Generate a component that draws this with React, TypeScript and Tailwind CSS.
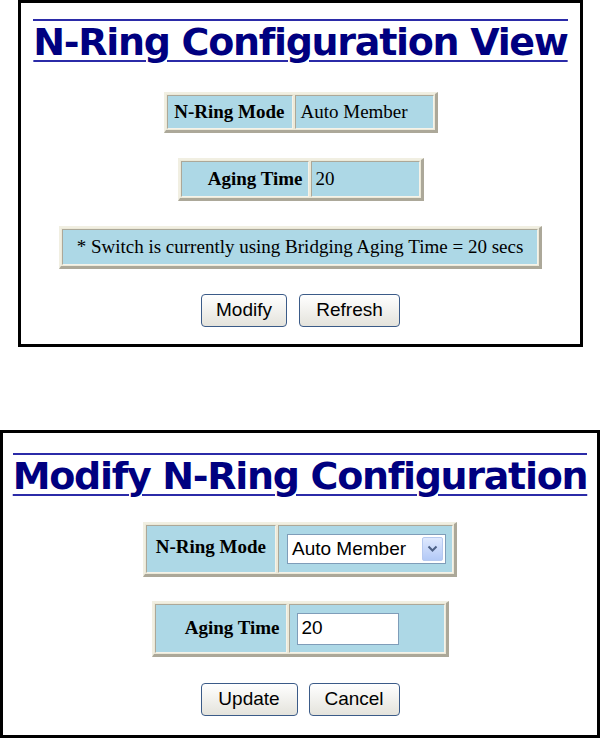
import React from "react";

const serif = { fontFamily: '"Liberation Serif", "Times New Roman", serif' };
const sans = { fontFamily: '"Liberation Sans", Arial, sans-serif' };
const verdana = { fontFamily: '"DejaVu Sans", Verdana, sans-serif' };

function Tbl({ children }: { children: React.ReactNode }) {
  return (
    <div className="flex gap-[2px] p-[1px] bg-[#ece9d8] border-solid border-t-2 border-l-2 border-b-[3px] border-r-[3px] border-t-[#f1efe2] border-l-[#f1efe2] border-b-[#aca899] border-r-[#aca899]">
      {children}
    </div>
  );
}

function Cell({ className, children }: { className: string; children?: React.ReactNode }) {
  return (
    <div
      className={
        "flex bg-[#add8e6] border border-solid border-t-[#aca899] border-l-[#aca899] border-b-[#f5f3ea] border-r-[#f5f3ea] text-[19px] text-black " +
        className
      }
      style={serif}
    >
      {children}
    </div>
  );
}

function Btn({ w, children }: { w: string; children: React.ReactNode }) {
  return (
    <div
      className={
        "h-[33px] flex items-center justify-center rounded-[4px] border border-solid border-[#3b5b88] bg-gradient-to-b from-white to-[#e4e3dc] text-[19px] text-black " +
        w
      }
      style={sans}
    >
      {children}
    </div>
  );
}

function Heading({ children }: { children: React.ReactNode }) {
  return (
    <div className="border-t-2 border-solid border-[#2b2ba8]">
      <div
        className="text-[38px] leading-[42px] tracking-[-1.3px] font-bold text-[#000080] underline decoration-2 underline-offset-[5px] decoration-[#2b2ba8] whitespace-nowrap"
        style={verdana}
      >
        {children}
      </div>
    </div>
  );
}

export default function App() {
  return (
    <div className="w-[602px] h-[739px] bg-white relative">
      {/* Top panel */}
      <div className="ml-[18px] w-[565px] border-[3px] border-solid border-black flex flex-col items-center pt-[16px] pb-[17px]">
        <Heading>N-Ring Configuration View</Heading>
        <div className="mt-[29px]">
          <Tbl>
            <Cell className="w-[126px] h-[34px] items-center justify-end pr-[7px] font-bold">N-Ring Mode</Cell>
            <Cell className="w-[139px] h-[34px] items-center pl-[5px]">Auto Member</Cell>
          </Tbl>
        </div>
        <div className="mt-[25px]">
          <Tbl>
            <Cell className="w-[128px] h-[36px] items-center justify-end pr-[5px] font-bold">Aging Time</Cell>
            <Cell className="w-[109px] h-[36px] items-center pl-[4px]">20</Cell>
          </Tbl>
        </div>
        <div className="mt-[25px]">
          <Tbl>
            <Cell className="w-[476px] h-[36px] items-center justify-center">
              * Switch is currently using Bridging Aging Time = 20 secs
            </Cell>
          </Tbl>
        </div>
        <div className="mt-[25px] flex gap-[12px]">
          <Btn w="w-[86px]">Modify</Btn>
          <Btn w="w-[101px]">Refresh</Btn>
        </div>
      </div>

      {/* Bottom panel */}
      <div className="mt-[83px] w-[600px] border-[3px] border-solid border-black flex flex-col items-center pt-[20px] pb-[19px]">
        <Heading>Modify N-Ring Configuration</Heading>
        <div className="mt-[25px]">
          <Tbl>
            <Cell className="w-[130px] h-[48px] items-start justify-end pr-[9px] pt-[7px] font-bold">N-Ring Mode</Cell>
            <Cell className="w-[175px] h-[48px] items-center pl-[8px]">
              <div
                className="w-[159px] h-[30px] bg-white border border-solid border-[#7f9db9] flex items-center pl-[4px] pr-[2px]"
                style={sans}
              >
                <span className="flex-1 text-[19px] text-black">Auto Member</span>
                <div className="w-[21px] h-[24px] rounded-[2px] border border-solid border-[#b6c9ef] bg-gradient-to-b from-[#dfe9fe] to-[#b3c9f6] flex items-center justify-center">
                  <svg width="11" height="8" viewBox="0 0 11 8">
                    <path d="M1.5 1.5 L5.5 5.5 L9.5 1.5" fill="none" stroke="#4d6185" strokeWidth="2" />
                  </svg>
                </div>
              </div>
            </Cell>
          </Tbl>
        </div>
        <div className="mt-[24px]">
          <Tbl>
            <Cell className="w-[132px] h-[49px] items-center justify-end pr-[6px] font-bold">Aging Time</Cell>
            <Cell className="w-[156px] h-[49px] items-center pl-[7px]">
              <div
                className="w-[102px] h-[32px] bg-white border border-solid border-[#7f9db9] flex items-center pl-[4px] text-[19px] text-black"
                style={sans}
              >
                20
              </div>
            </Cell>
          </Tbl>
        </div>
        <div className="mt-[26px] flex gap-[11px]">
          <Btn w="w-[97px]">Update</Btn>
          <Btn w="w-[91px]">Cancel</Btn>
        </div>
      </div>
    </div>
  );
}
